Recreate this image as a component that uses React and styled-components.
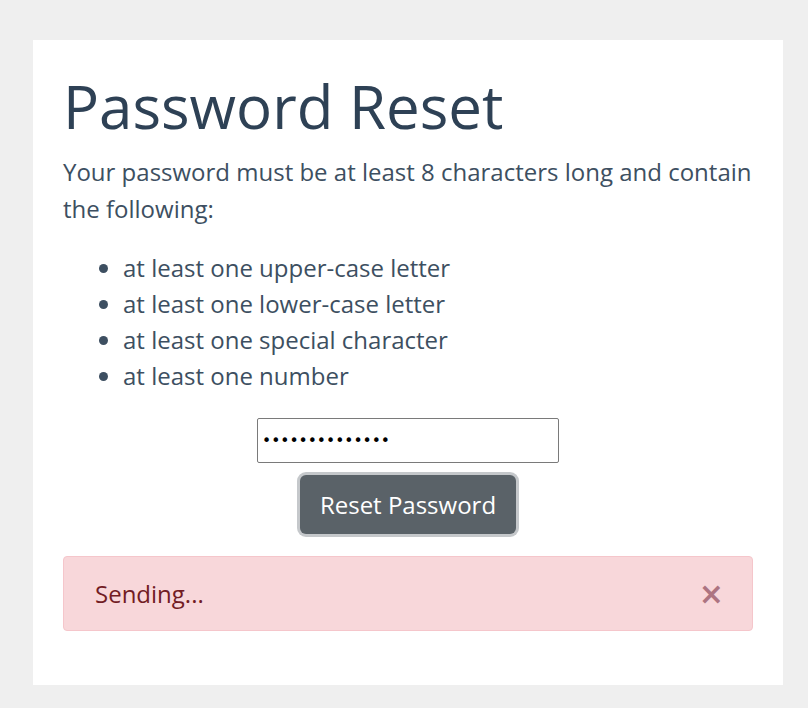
import React from "react";
import styled, { createGlobalStyle } from "styled-components";

const Global = createGlobalStyle`
  html, body { margin: 0; padding: 0; background: #efefef; }
  body { font-family: "Open Sans", "Noto Sans", sans-serif; color: #33475b; }
  * { box-sizing: border-box; }
`;

const Page = styled.div`
  padding: 40px 25px 23px 33px;
`;

const Card = styled.div`
  background: #fff;
  width: 750px;
  padding: 30px 30px 54px 30px;
`;

const Title = styled.h1`
  margin: 0 0 11px 0;
  font-size: 60px;
  font-weight: 400;
  line-height: 1.2;
  color: #2e4155;
`;

const Intro = styled.p`
  margin: 0 0 23px 0;
  font-size: 24px;
  line-height: 37px;
  color: #3d4f61;
`;

const List = styled.ul`
  margin: 0 0 24px 0;
  padding-left: 60px;
  font-size: 24px;
  line-height: 36px;
  color: #3d4f61;
`;

const Form = styled.form`
  display: flex;
  flex-direction: column;
  align-items: center;
  gap: 9px;
`;

const Input = styled.input`
  width: 302px;
  height: 45px;
  border: 1px solid #7a7a7a;
  border-radius: 2px;
  padding: 0 4px;
  font-size: 15.5px;
  font-family: "DejaVu Sans", sans-serif;
  color: #000;
  outline: none;
`;

const Button = styled.button`
  height: 59px;
  padding: 0 20px;
  background: #5a6268;
  color: #fff;
  border: none;
  border-radius: 6px;
  font-family: "Open Sans", sans-serif;
  font-size: 24px;
  box-shadow: 0 0 0 3px #c5c8cb;
  margin-top: 3px;
`;

const Alert = styled.div`
  margin-top: 22px;
  height: 75px;
  display: flex;
  align-items: center;
  justify-content: space-between;
  padding: 0 28px 0 31px;
  background: #f8d7da;
  border: 1px solid #f5c6cb;
  border-radius: 4px;
  color: #721c24;
  font-size: 24px;
`;

const Close = styled.span`
  color: #ad7481;
  font-size: 30px;
  font-weight: 700;
  line-height: 1;
  font-family: "DejaVu Sans", sans-serif;
`;

export default function App() {
  return (
    <>
      <Global />
      <Page>
        <Card>
          <Title>Password Reset</Title>
          <Intro>
            Your password must be at least 8 characters long and contain the
            following:
          </Intro>
          <List>
            <li>at least one upper-case letter</li>
            <li>at least one lower-case letter</li>
            <li>at least one special character</li>
            <li>at least one number</li>
          </List>
          <Form onSubmit={(e) => e.preventDefault()}>
            <Input type="password" defaultValue="abcdefghijklmn" />
            <Button type="submit">Reset Password</Button>
          </Form>
          <Alert>
            <span>Sending...</span>
            <Close>×</Close>
          </Alert>
        </Card>
      </Page>
    </>
  );
}
